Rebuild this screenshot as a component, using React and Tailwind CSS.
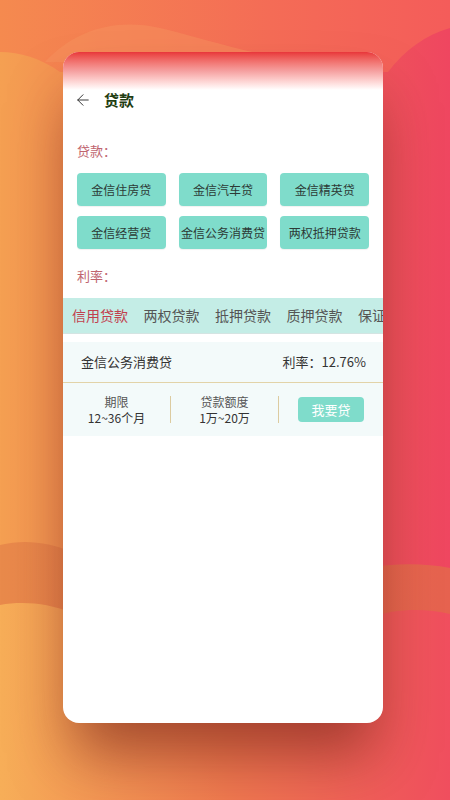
import React, { useState } from 'react';
import { ArrowLeft } from 'lucide-react';

const loans = ['金信住房贷', '金信汽车贷', '金信精英贷', '金信经营贷', '金信公务消费贷', '两权抵押贷款'];
const tabs = ['信用贷款', '两权贷款', '抵押贷款', '质押贷款', '保证贷款'];

// wavy backdrop behind the card
const Background = () => (
  <svg className="absolute inset-0" width="450" height="800" viewBox="0 0 450 800">
    <defs>
      <linearGradient id="base" x1="0" y1="0" x2="1" y2="0">
        <stop offset="0" stopColor="#f5a052" />
        <stop offset="0.5" stopColor="#f07052" />
        <stop offset="1" stopColor="#ef4660" />
      </linearGradient>
      <linearGradient id="top" x1="0" y1="0" x2="1" y2="0">
        <stop offset="0" stopColor="#f58a4f" />
        <stop offset="0.6" stopColor="#f46c56" />
        <stop offset="1" stopColor="#f45c5a" />
      </linearGradient>
      <linearGradient id="band" x1="0" y1="0" x2="1" y2="0">
        <stop offset="0" stopColor="#e98a4b" />
        <stop offset="1" stopColor="#e6624f" />
      </linearGradient>
      <linearGradient id="low" x1="0" y1="0" x2="1" y2="0">
        <stop offset="0" stopColor="#f7ae58" />
        <stop offset="0.5" stopColor="#f07a50" />
        <stop offset="1" stopColor="#f04e5e" />
      </linearGradient>
    </defs>
    <rect width="450" height="800" fill="url(#base)" />
    <path d="M0 0 H450 V28 C425 35 405 50 388 72 L60 72 C40 58 20 52 0 52 Z" fill="url(#top)" />
    <path d="M45 62 C75 30 115 18 160 28 C210 40 250 55 310 62 Z" fill="#f79460" opacity="0.45" />
    <path d="M0 545 C40 535 80 550 120 580 L330 580 C360 565 410 560 450 568 L450 800 L0 800 Z" fill="url(#band)" />
    <path d="M0 605 C40 598 80 610 120 640 L330 640 C360 612 410 604 450 614 L450 800 L0 800 Z" fill="url(#low)" />
  </svg>
);

const App = () => {
  const [active, setActive] = useState(0);

  return (
    <div className="relative w-[450px] h-[800px] overflow-hidden font-['Noto_Sans_CJK_SC','Noto_Sans',sans-serif]">
      <Background />
      <div className="relative pt-[52px] pl-[63px]">
        <div className="w-[320px] h-[671px] rounded-[16px] bg-white overflow-hidden shadow-[0_40px_60px_-10px_rgba(110,30,20,0.6)]">
          <div className="h-[38px] bg-gradient-to-b from-[#e8353a] via-[#f5a0a0] to-white" />

          <div className="h-[20px] flex items-center pl-[11px]">
            <ArrowLeft size={18} strokeWidth={1.3} className="text-[#333]" />
            <span className="ml-[12px] text-[15px] font-bold text-[#1f3d12] leading-[20px]">贷款</span>
          </div>

          <div className="mt-[32px] px-[14px] text-[13px] leading-[18px] text-[#c0646e]">贷款：</div>

          <div className="mt-[13px] px-[14px] grid grid-cols-3 gap-x-[13px] gap-y-[10px]">
            {loans.map((name) => (
              <button
                key={name}
                className="h-[33px] rounded-[4px] bg-[#7fdccb] text-[12px] text-[#2d3a36] shadow-[0_1px_1px_rgba(0,0,0,0.06)]"
              >
                {name}
              </button>
            ))}
          </div>

          <div className="mt-[18px] px-[14px] text-[13px] leading-[18px] text-[#c0646e]">利率：</div>

          <div className="mt-[13px] h-[36px] bg-[#c4ede6] border-b border-[#d4e4e2] flex items-center gap-[15.5px] pl-[9px] whitespace-nowrap overflow-hidden">
            {tabs.map((t, i) => (
              <span
                key={t}
                onClick={() => setActive(i)}
                className={`text-[14px] shrink-0 ${i === active ? 'text-[#c2404e]' : 'text-[#555]'}`}
              >
                {t}
              </span>
            ))}
          </div>

          <div className="mt-[8px] bg-[#f3fafa]">
            <div className="h-[41px] flex items-center justify-between pl-[18px] pr-[17px] text-[13px] text-[#333] border-b border-[#e2d3a8]">
              <span>金信公务消费贷</span>
              <span>利率：12.76%</span>
            </div>
            <div className="h-[53px] flex items-center">
              <div className="w-[107px] flex flex-col items-center text-[12px] leading-[16px]">
                <span className="text-[#555]">期限</span>
                <span className="text-[#333]">12~36个月</span>
              </div>
              <div className="w-px h-[27px] bg-[#dccba0]" />
              <div className="w-[107px] flex flex-col items-center text-[12px] leading-[16px]">
                <span className="text-[#555]">贷款额度</span>
                <span className="text-[#333]">1万~20万</span>
              </div>
              <div className="w-px h-[27px] bg-[#dccba0]" />
              <div className="flex-1 flex justify-center">
                <button className="w-[66px] h-[25px] rounded-[4px] bg-[#7fdccb] text-[13px] text-white">我要贷</button>
              </div>
            </div>
          </div>
        </div>
      </div>
    </div>
  );
};

export default App;
